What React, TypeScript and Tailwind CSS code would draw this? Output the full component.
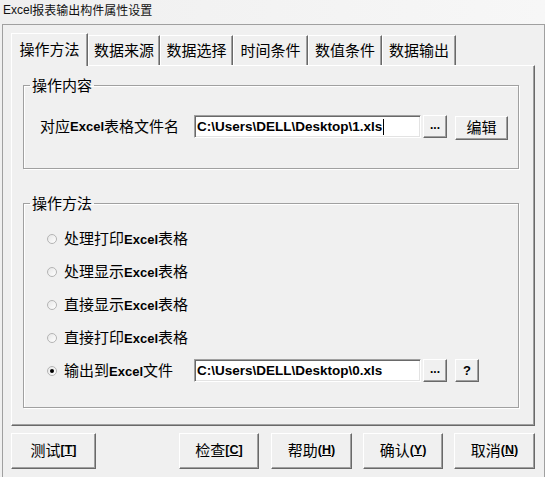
import React from "react";

const CN = "font-['Noto_Sans_CJK_SC','Noto_Sans_CJK_JP',sans-serif]";
const LAT = "font-['Liberation_Sans',Arial,sans-serif]";

function Ex() {
  return <span className={`${LAT} font-bold text-[13px]`}>Excel</span>;
}

function Textbox({ value, caret }: { value: string; caret?: boolean }) {
  return (
    <div className="w-[227px] h-[23px] bg-white border border-t-[#a0a0a0] border-l-[#a0a0a0] border-b-white border-r-white shadow-[inset_1px_1px_0_#696969,inset_-1px_-1px_0_#e3e3e3] flex items-center pl-[2px]">
      <span className={`${LAT} font-bold text-[13.5px] text-black leading-none whitespace-pre`}>{value}</span>
      {caret && <span className="w-px h-[16px] bg-black ml-[1px]" />}
    </div>
  );
}

function Btn({ className, children }: { className: string; children: React.ReactNode }) {
  return (
    <div
      className={`flex items-center justify-center bg-[#f0f0f0] border border-t-white border-l-white border-r-[#696969] border-b-[#696969] shadow-[inset_-1px_-1px_0_#a0a0a0] text-black ${className}`}
    >
      {children}
    </div>
  );
}

function Key({ open, k, close }: { open: string; k: string; close: string }) {
  return (
    <span className={`${LAT} font-bold text-[12.5px]`}>
      {open}
      <span className="underline underline-offset-[1px]">{k}</span>
      {close}
    </span>
  );
}

function Tab({ label, active, w }: { label: string; active?: boolean; w: string }) {
  if (active) {
    return (
      <div
        className={`${w} h-[33px] -mb-px relative z-10 bg-[#f0f0f0] border-t border-l border-r border-t-white border-l-white border-r-[#696969] shadow-[inset_-1px_0_0_#a0a0a0] flex items-center justify-center pb-[2px] text-[15px] text-black`}
      >
        {label}
      </div>
    );
  }
  return (
    <div
      className={`${w} h-[30px] bg-[#f0f0f0] border-t border-l border-r border-t-white border-l-white border-r-[#696969] shadow-[inset_-1px_0_0_#a0a0a0] flex items-center justify-center text-[15px] text-black`}
    >
      {label}
    </div>
  );
}

function Dot({ checked }: { checked?: boolean }) {
  return (
    <div className="w-[10px] h-[10px] rounded-full border border-[#b4b4b4] bg-gradient-to-br from-[#e6e6e6] to-white flex items-center justify-center">
      {checked && <div className="w-[4px] h-[4px] rounded-full bg-black" />}
    </div>
  );
}

function Radio({ children }: { children: React.ReactNode }) {
  return (
    <div className="h-[33px] flex items-center pl-[23px]">
      <Dot />
      <div className="ml-[7px] text-[15px] leading-[20px] text-black whitespace-nowrap">{children}</div>
    </div>
  );
}

export default function App() {
  return (
    <div className={`${CN} w-[545px] h-[477px] bg-[#f0f0f0] overflow-hidden`}>
      <div className="h-[24px] bg-gradient-to-r from-[#efefef] to-[#f7f7f7] flex items-center pl-[3px] pb-[4px] text-[12px] text-[#111] whitespace-nowrap">
        <span className={`${LAT} text-[12px]`}>Excel</span>报表输出构件属性设置
      </div>
      <div className="ml-[2px] w-[543px] h-[453px] border-t border-l border-r border-[#a0a0a0] pl-[8px] pt-[8px]">
        <div className="flex items-end">
          <Tab label="操作方法" active w="w-[77px]" />
          <Tab label="数据来源" w="w-[72px]" />
          <Tab label="数据选择" w="w-[73px]" />
          <Tab label="时间条件" w="w-[75px]" />
          <Tab label="数值条件" w="w-[74px]" />
          <Tab label="数据输出" w="w-[74px]" />
        </div>
        <div className="w-[524px] h-[361px] border border-t-white border-l-white border-r-[#696969] border-b-[#696969] shadow-[inset_-1px_-1px_0_#a0a0a0] pl-[11px] pt-[9px]">
          <fieldset className="w-[496px] border border-[#a0a0a0] shadow-[1px_1px_0_#fff,inset_1px_1px_0_#fff]">
            <legend className="ml-[6px] px-[2px] h-[20px] leading-[20px] text-[15px] text-black">操作内容</legend>
            <div className="h-[73px] pt-[20px]">
              <div className="flex items-start">
                <div className="w-[170px] pl-[16px] h-[23px] flex items-center text-[15px] text-black whitespace-nowrap">
                  对应<Ex />表格文件名
                </div>
                <Textbox value={"C:\\Users\\DELL\\Desktop\\1.xls"} caret />
                <Btn className="ml-[2px] w-[24px] h-[23px]">
                  <span className={`${LAT} font-bold text-[12px] pb-[3px]`}>...</span>
                </Btn>
                <Btn className="ml-[8px] mt-[1px] w-[53px] h-[24px] text-[15px] pb-[2px]">编辑</Btn>
              </div>
            </div>
          </fieldset>
          <fieldset className="mt-[24px] w-[496px] border border-[#a0a0a0] shadow-[1px_1px_0_#fff,inset_1px_1px_0_#fff]">
            <legend className="ml-[6px] px-[2px] h-[20px] leading-[20px] text-[15px] text-black">操作方法</legend>
            <div className="pt-[9px] pb-[20px]">
              <Radio>
                处理打印<Ex />表格
              </Radio>
              <Radio>
                处理显示<Ex />表格
              </Radio>
              <Radio>
                直接显示<Ex />表格
              </Radio>
              <Radio>
                直接打印<Ex />表格
              </Radio>
              <div className="h-[33px] flex items-center pl-[23px]">
                <Dot checked />
                <div className="ml-[7px] w-[130px] text-[15px] leading-[20px] text-black whitespace-nowrap">
                  输出到<Ex />文件
                </div>
                <Textbox value={"C:\\Users\\DELL\\Desktop\\0.xls"} />
                <Btn className="ml-[2px] w-[24px] h-[23px]">
                  <span className={`${LAT} font-bold text-[12px] pb-[3px]`}>...</span>
                </Btn>
                <Btn className="ml-[8px] w-[24px] h-[23px]">
                  <span className={`${LAT} font-bold text-[13px]`}>?</span>
                </Btn>
              </div>
            </div>
          </fieldset>
        </div>
        <div className="mt-[7px] flex items-start">
          <Btn className="w-[85px] h-[36px] text-[15px] pb-[2px]">
            测试<Key open="[" k="T" close="]" />
          </Btn>
          <Btn className="ml-[83px] w-[80px] h-[36px] text-[15px] pb-[2px]">
            检查<Key open="[" k="C" close="]" />
          </Btn>
          <Btn className="ml-[12px] w-[81px] h-[36px] text-[15px] pb-[2px]">
            帮助<Key open="(" k="H" close=")" />
          </Btn>
          <Btn className="ml-[11px] w-[80px] h-[36px] text-[15px] pb-[2px]">
            确认<Key open="(" k="Y" close=")" />
          </Btn>
          <Btn className="ml-[11px] w-[81px] h-[36px] text-[15px] pb-[2px]">
            取消<Key open="(" k="N" close=")" />
          </Btn>
        </div>
      </div>
    </div>
  );
}
